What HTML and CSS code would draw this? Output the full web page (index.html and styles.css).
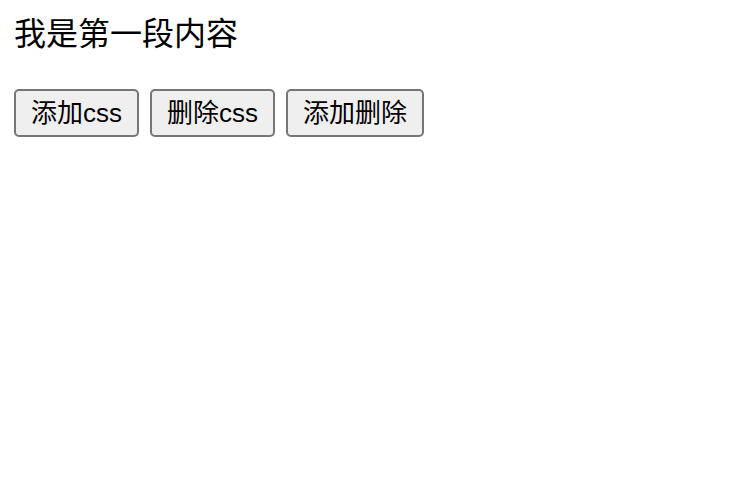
FILE: index.html
```html
<!DOCTYPE html>
<html lang="zh-CN">
<head>
<meta charset="utf-8">
<title>demo</title>
<link rel="stylesheet" href="styles.css">
</head>
<body>
<p class="intro">我是第一段内容</p>
<div class="actions">
  <button class="btn" type="button">添加css</button>
  <button class="btn" type="button">删除css</button>
  <button class="btn" type="button">添加删除</button>
</div>
</body>
</html>
```

FILE: styles.css
```css
html, body {
  margin: 0;
  padding: 0;
  background: #ffffff;
}
body {
  padding: 14px;
  font-family: "Liberation Sans", "Noto Sans CJK SC", sans-serif;
  color: #000000;
}
.intro {
  margin: 0;
  font-size: 32px;
  line-height: 40px;
}
.actions {
  display: flex;
  gap: 11px;
  margin-top: 35px;
}
.btn {
  box-sizing: border-box;
  height: 48px;
  padding: 0 15px;
  font-family: "Liberation Sans", "Noto Sans CJK SC", sans-serif;
  font-size: 26px;
  line-height: 30px;
  color: #000000;
  background: #efefef;
  border: 2px solid #767676;
  border-radius: 5px;
}
```
